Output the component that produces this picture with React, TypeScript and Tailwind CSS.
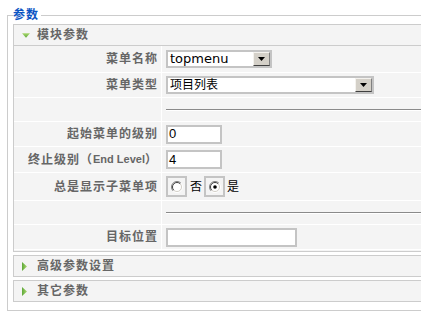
const cjk = "[font-family:'Liberation_Sans','Noto_Sans_CJK_SC',sans-serif]";

function DownTri() {
  return (
    <svg width="9" height="5" viewBox="0 0 9 5">
      <defs>
        <linearGradient id="gd" x1="0" y1="0" x2="0" y2="1">
          <stop offset="0" stopColor="#a9d86e" />
          <stop offset="1" stopColor="#5fa83a" />
        </linearGradient>
      </defs>
      <polygon points="0,0 9,0 4.5,5" fill="url(#gd)" />
    </svg>
  );
}

function RightTri({ id }: { id: string }) {
  return (
    <svg width="5" height="9" viewBox="0 0 5 9">
      <defs>
        <linearGradient id={id} x1="0" y1="0" x2="1" y2="0">
          <stop offset="0" stopColor="#5fa83a" />
          <stop offset="1" stopColor="#a9d86e" />
        </linearGradient>
      </defs>
      <polygon points="0,0 5,4.5 0,9" fill={`url(#${id})`} />
    </svg>
  );
}

function Radio({ checked }: { checked?: boolean }) {
  return (
    <div className="w-[21px] h-[21px] border-2 border-[#c4c4c4] flex items-center justify-center">
      <svg width="12" height="12" viewBox="0 0 12 12">
        <circle cx="6" cy="6" r="4.5" fill="#fff" />
        <path d="M2.1 9.9 A5.5 5.5 0 0 1 9.9 2.1" stroke="#808080" fill="none" />
        <path d="M9.9 2.1 A5.5 5.5 0 0 1 2.1 9.9" stroke="#ffffff" fill="none" />
        <path d="M2.8 9.2 A4.5 4.5 0 0 1 9.2 2.8" stroke="#404040" fill="none" />
        <path d="M9.2 2.8 A4.5 4.5 0 0 1 2.8 9.2" stroke="#d4d0c8" fill="none" />
        {checked && <circle cx="6" cy="6" r="1.8" fill="#000" />}
      </svg>
    </div>
  );
}

function Select({ w, children }: { w: string; children: React.ReactNode }) {
  return (
    <div className={`${w} h-[18px] border-2 border-[#c4c4c4] bg-white flex items-stretch`}>
      <div className="flex-1 flex items-center pl-[2px] text-black">{children}</div>
      <div className="w-[17px] bg-[#d4d0c8] border-t border-l border-t-[#f4f2ee] border-l-[#f4f2ee] border-b border-r border-b-[#404040] border-r-[#808080] flex items-center justify-center">
        <svg width="7" height="4" viewBox="0 0 7 4">
          <polygon points="0,0 7,0 3.5,4" fill="#000" />
        </svg>
      </div>
    </div>
  );
}

function Input({ w, value }: { w: string; value?: string }) {
  return (
    <div className={`${w} h-[19px] border-2 border-[#c4c4c4] bg-white flex items-center pl-[1px] text-[13px] text-black font-['Liberation_Sans']`}>
      {value}
    </div>
  );
}

function Row({ h, label, children }: { h: string; label?: React.ReactNode; children?: React.ReactNode }) {
  return (
    <div className={`${h} flex border-b border-white`}>
      <div className="w-[148px] shrink-0 border-r border-white flex items-center justify-end pr-[3px] text-[12px] font-bold text-[#666] tracking-[1px] whitespace-nowrap">
        {label}
      </div>
      <div className="flex-1 flex items-center pl-[4px]">{children}</div>
    </div>
  );
}

function Hr() {
  return <div className="w-full h-[2px] border-t border-[#8a8a8a] border-b border-b-white" />;
}

function ClosedPanel({ title, id }: { title: string; id: string }) {
  return (
    <div className="border border-[#ccc] bg-[#f4f4f4] mb-[3px]">
      <div className="h-[20px] flex items-center pl-[8px]">
        <div className="w-[8px] flex">
          <RightTri id={id} />
        </div>
        <span className="ml-[7px] text-[12px] font-bold text-[#666] tracking-[1px]">{title}</span>
      </div>
    </div>
  );
}

export default function App() {
  return (
    <div className={`w-[421px] h-[332px] overflow-hidden bg-white pl-[7px] pt-[8px] ${cjk}`}>
      <fieldset className="w-[440px] border border-[#ccc] px-[5px] pt-[2px] pb-[5px]">
        <legend className="px-0 pr-[2px] text-[12px] leading-[14px] font-bold text-[#0b55c4] tracking-[1px]">
          参数
        </legend>

        <div className="border border-[#ccc] bg-[#f4f4f4] mb-[3px]">
          <div className="h-[21px] border-b border-[#ccc] flex items-center pl-[8px]">
            <div className="w-[8px] flex">
              <DownTri />
            </div>
            <span className="ml-[7px] text-[12px] font-bold text-[#666] tracking-[1px]">模块参数</span>
          </div>
          <div className="pb-[1px]">
            <Row h="h-[27px]" label="菜单名称">
              <Select w="w-[106px]">
                <span className="text-[13px] font-['DejaVu_Sans']">topmenu</span>
              </Select>
            </Row>
            <Row h="h-[25px]" label="菜单类型">
              <Select w="w-[208px]">
                <span className="text-[12px]">项目列表</span>
              </Select>
            </Row>
            <Row h="h-[24px]">
              <Hr />
            </Row>
            <Row h="h-[25px]" label="起始菜单的级别">
              <Input w="w-[56px]" value="0" />
            </Row>
            <Row
              h="h-[26px]"
              label={
                <>
                  终止级别（<span className="text-[11px] tracking-normal">End Level</span>）
                </>
              }
            >
              <Input w="w-[56px]" value="4" />
            </Row>
            <Row h="h-[28px]" label="总是显示子菜单项">
              <div className="flex items-center text-[12px] text-black">
                <Radio />
                <span className="ml-[3px]">否</span>
                <div className="ml-[2px]">
                  <Radio checked />
                </div>
                <span className="ml-[2px]">是</span>
              </div>
            </Row>
            <Row h="h-[24px]">
              <Hr />
            </Row>
            <Row h="h-[25px]" label="目标位置">
              <Input w="w-[131px]" />
            </Row>
          </div>
        </div>

        <ClosedPanel title="高级参数设置" id="g2" />
        <ClosedPanel title="其它参数" id="g3" />
      </fieldset>
    </div>
  );
}
